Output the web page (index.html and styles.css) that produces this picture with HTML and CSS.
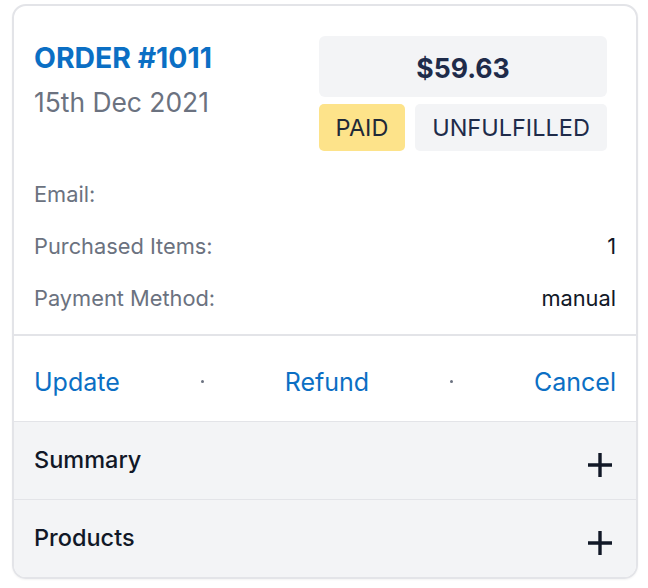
FILE: index.html
```html
<!DOCTYPE html>
<html>
<head>
<meta charset="utf-8">
<link rel="stylesheet" href="styles.css">
</head>
<body>
<div class="card">
  <div class="header">
    <div class="head-top">
      <div class="head-left">
        <div class="order-title">ORDER #1011</div>
        <div class="order-date">15th Dec 2021</div>
      </div>
      <div class="head-right">
        <div class="price">$59.63</div>
        <div class="badges">
          <span class="badge badge-paid">PAID</span>
          <span class="badge badge-status">UNFULFILLED</span>
        </div>
      </div>
    </div>
    <div class="info">
      <div class="info-row"><span class="info-label">Email:</span><span class="info-value email-value"></span></div>
      <div class="info-row"><span class="info-label">Purchased Items:</span><span class="info-value">1</span></div>
      <div class="info-row"><span class="info-label">Payment Method:</span><span class="info-value">manual</span></div>
    </div>
  </div>
  <div class="actions">
    <a class="action">Update</a>
    <span class="dot"></span>
    <a class="action">Refund</a>
    <span class="dot"></span>
    <a class="action">Cancel</a>
  </div>
  <div class="section">
    <span class="section-title">Summary</span>
    <svg class="plus" viewBox="0 0 24 24" width="24" height="24"><path d="M12 0.5v23M0.5 12h23" stroke="#111827" stroke-width="3.4" stroke-linecap="round" fill="none"/></svg>
  </div>
  <div class="section last">
    <span class="section-title">Products</span>
    <svg class="plus" viewBox="0 0 24 24" width="24" height="24"><path d="M12 0.5v23M0.5 12h23" stroke="#111827" stroke-width="3.4" stroke-linecap="round" fill="none"/></svg>
  </div>
</div>
</body>
</html>
```

FILE: styles.css
```css
* { box-sizing: border-box; }
html, body { margin: 0; padding: 0; background: #ffffff; }
body {
  font-family: Inter, "Noto Sans", "Liberation Sans", sans-serif;
  padding: 4px 10px 9px 12px;
}
.card {
  width: 626px;
  height: 575px;
  border: 2px solid #e3e4e8;
  border-radius: 14px;
  overflow: hidden;
  display: flex;
  flex-direction: column;
  box-shadow: 0 1px 2px rgba(0,0,0,0.05);
}
.header {
  padding: 30px 20px 0 20px;
  border-bottom: 2px solid #e3e4e8;
  height: 330px;
}
.head-top {
  display: flex;
  justify-content: space-between;
}
.head-left { padding-top: 5px; }
.order-title {
  color: #0b6fc4;
  font-size: 28.4px;
  font-weight: 700;
  line-height: 34px;
}
.order-date {
  color: #6b7280;
  font-size: 26.4px;
  line-height: 34px;
  margin-top: 10px;
}
.head-right {
  width: 288px;
  margin-right: 9px;
  display: flex;
  flex-direction: column;
  gap: 7px;
}
.price {
  height: 61px;
  background: #f3f4f6;
  border-radius: 6px;
  display: flex;
  align-items: center;
  justify-content: center;
  font-size: 26.6px;
  font-weight: 700;
  color: #1e2b4a;
  padding-top: 2px;
}
.badges { display: flex; gap: 10px; }
.badge {
  height: 47px;
  border-radius: 5px;
  display: flex;
  align-items: center;
  justify-content: center;
  font-size: 23.5px;
  color: #1e2b4a;
}
.badge-paid { width: 86px; background: #fde38a; color: #1f2937; }
.badge-status { flex: 1; background: #f3f4f6; }
.info { margin-top: 17px; }
.info-row {
  display: flex;
  justify-content: space-between;
  align-items: center;
  height: 52px;
  font-size: 21.8px;
}
.info-label { color: #6b7280; }
.info-value { color: #111827; }
.actions {
  height: 86px;
  display: flex;
  justify-content: space-between;
  align-items: center;
  padding: 6px 20px 0 20px;
  border-bottom: 1px solid #e3e4e8;
}
.action {
  color: #0b6fc4;
  font-size: 25px;
  cursor: pointer;
}
.dot {
  width: 3px;
  height: 3px;
  border-radius: 50%;
  background: #6b7280;
}
.section {
  background: #f3f4f6;
  height: 78px;
  display: flex;
  align-items: center;
  justify-content: space-between;
  padding: 0 24px 0 20px;
  border-bottom: 1px solid #e3e4e8;
}
.section.last { border-bottom: none; flex: 1; }
.section-title {
  font-size: 23.5px;
  font-weight: 500;
  color: #111827;
  margin-top: -3px;
}
.plus { margin-top: 8px; }
```
